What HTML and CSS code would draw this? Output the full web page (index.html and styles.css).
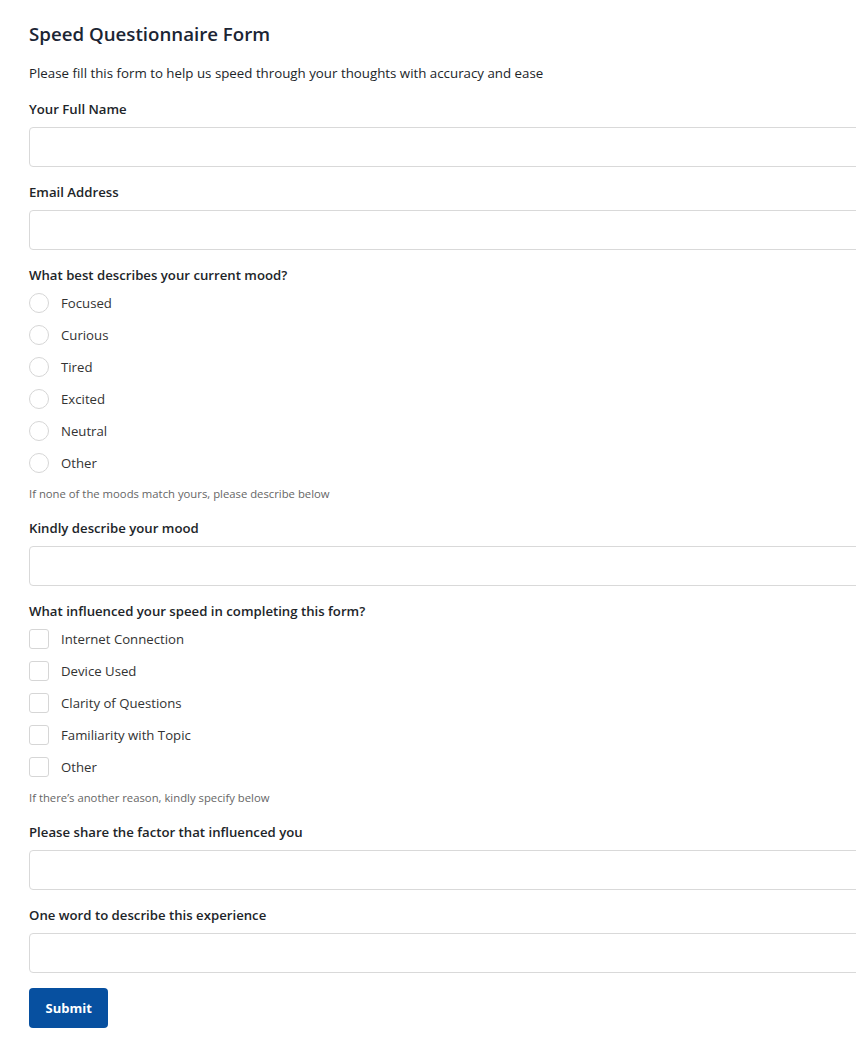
FILE: index.html
```html
<!DOCTYPE html>
<html lang="en">
<head>
<meta charset="utf-8">
<title>Speed Questionnaire Form</title>
<link rel="stylesheet" href="styles.css">
</head>
<body>
<form class="form">
  <h1 class="title">Speed Questionnaire Form</h1>
  <p class="intro">Please fill this form to help us speed through your thoughts with accuracy and ease</p>

  <div class="field">
    <label class="label">Your Full Name</label>
    <input class="input" type="text">
  </div>

  <div class="field">
    <label class="label">Email Address</label>
    <input class="input" type="email">
  </div>

  <div class="field">
    <div class="label">What best describes your current mood?</div>
    <div class="options">
      <label class="option"><span class="radio"></span>Focused</label>
      <label class="option"><span class="radio"></span>Curious</label>
      <label class="option"><span class="radio"></span>Tired</label>
      <label class="option"><span class="radio"></span>Excited</label>
      <label class="option"><span class="radio"></span>Neutral</label>
      <label class="option"><span class="radio"></span>Other</label>
    </div>
    <div class="help">If none of the moods match yours, please describe below</div>
  </div>

  <div class="field">
    <label class="label">Kindly describe your mood</label>
    <input class="input" type="text">
  </div>

  <div class="field">
    <div class="label">What influenced your speed in completing this form?</div>
    <div class="options">
      <label class="option"><span class="check"></span>Internet Connection</label>
      <label class="option"><span class="check"></span>Device Used</label>
      <label class="option"><span class="check"></span>Clarity of Questions</label>
      <label class="option"><span class="check"></span>Familiarity with Topic</label>
      <label class="option"><span class="check"></span>Other</label>
    </div>
    <div class="help">If there’s another reason, kindly specify below</div>
  </div>

  <div class="field">
    <label class="label">Please share the factor that influenced you</label>
    <input class="input" type="text">
  </div>

  <div class="field last">
    <label class="label">One word to describe this experience</label>
    <input class="input" type="text">
  </div>

  <button class="submit" type="button">Submit</button>
</form>
</body>
</html>
```

FILE: styles.css
```css
html, body {
  margin: 0;
  padding: 0;
  background: #ffffff;
  overflow: hidden;
}

body {
  font-family: "Open Sans", "Noto Sans", "Liberation Sans", sans-serif;
  color: #212529;
  font-size: 13px;
}

.form {
  padding: 22px 0 0 29px;
  width: 860px;
}

.title {
  margin: 0 0 18px;
  font-size: 18.7px;
  line-height: 24px;
  font-weight: 600;
  color: #1b2534;
}

.intro {
  margin: 0 0 18px;
  font-size: 13.3px;
  line-height: 18px;
}

.field {
  margin-bottom: 16px;
}

.field.last {
  margin-bottom: 15px;
}

.label {
  display: block;
  font-size: 13.2px;
  line-height: 18px;
  font-weight: 600;
  margin-bottom: 9px;
}

.input {
  display: block;
  box-sizing: border-box;
  width: 860px;
  height: 40px;
  margin: 0;
  border: 1px solid #d9d9d9;
  border-radius: 4px;
  background: #fff;
  font: inherit;
}

.options {
  display: flex;
  flex-direction: column;
  gap: 12px;
}

.option {
  display: flex;
  align-items: center;
  gap: 12px;
  height: 20px;
  line-height: 20px;
  font-size: 13.2px;
  color: #333;
}

.radio,
.check {
  box-sizing: border-box;
  width: 20px;
  height: 20px;
  border: 1px solid #d6d6d6;
  background: #fff;
  flex: none;
}

.radio {
  border-radius: 50%;
}

.check {
  border-radius: 3px;
}

.help {
  margin-top: 13px;
  padding-bottom: 1px;
  font-size: 11.3px;
  line-height: 16px;
  color: #666;
}

.submit {
  display: block;
  height: 40px;
  padding: 0 16.5px;
  border: none;
  border-radius: 4px;
  background: #0750a0;
  color: #fff;
  font: inherit;
  font-weight: 700;
  font-size: 13px;
}
```
